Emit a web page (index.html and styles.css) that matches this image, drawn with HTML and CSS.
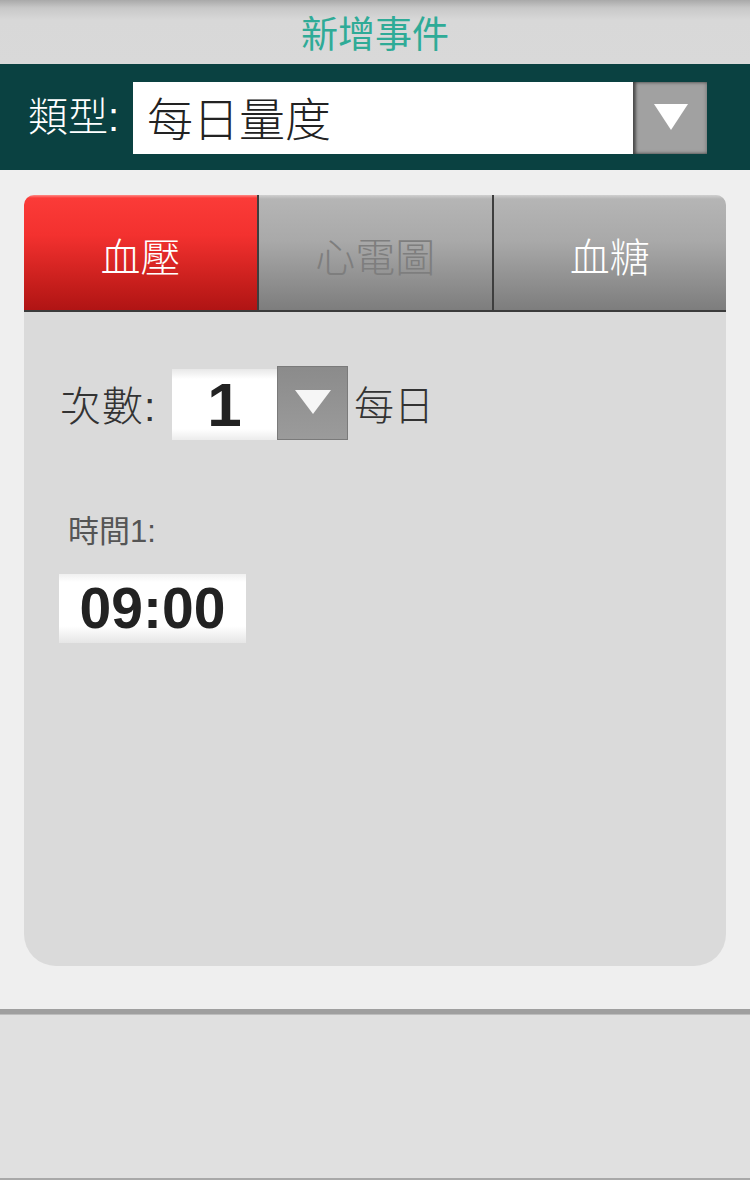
FILE: index.html
```html
<!DOCTYPE html>
<html lang="zh-Hant">
<head>
<meta charset="utf-8">
<title>新增事件</title>
<link rel="stylesheet" href="styles.css">
</head>
<body>
<div class="app">
  <header class="topbar">
    <h1 class="title">新增事件</h1>
  </header>
  <section class="typebar">
    <span class="type-label">類型:</span>
    <div class="select">
      <div class="select-value">每日量度</div>
      <div class="select-btn">
        <svg width="36" height="28" viewBox="0 0 36 28"><polygon points="1,1 35,1 18,27" fill="#ffffff"/></svg>
      </div>
    </div>
  </section>
  <main class="main">
    <div class="card">
      <div class="tabs">
        <div class="tab tab-active">血壓</div>
        <div class="tab tab-disabled">心電圖</div>
        <div class="tab tab-normal">血糖</div>
      </div>
      <div class="card-body">
        <div class="count-row">
          <span class="count-label">次數:</span>
          <div class="num-box">1</div>
          <div class="num-btn">
            <svg width="36" height="24" viewBox="0 0 36 24"><polygon points="0,0 36,0 18,24" fill="#f6f6f6"/></svg>
          </div>
          <span class="count-unit">每日</span>
        </div>
        <div class="time-label">時間1:</div>
        <div class="time-box">09:00</div>
      </div>
    </div>
  </main>
  <footer class="footer"></footer>
</div>
</body>
</html>
```

FILE: styles.css
```css
* { box-sizing: border-box; }
html, body { margin: 0; padding: 0; }
body {
  width: 750px;
  height: 1180px;
  overflow: hidden;
  font-family: "Noto Sans CJK TC", "Noto Sans", sans-serif;
  background: #efefef;
}
.app { display: flex; flex-direction: column; height: 1180px; }

.topbar {
  height: 64px;
  background: linear-gradient(to bottom, #a9a9a9 0px, #c8c8c8 8px, #d8d8d8 20px, #d9d9d9 100%);
  display: flex;
  align-items: center;
  justify-content: center;
}
.title {
  margin: 0;
  font-weight: 400;
  font-size: 37px;
  line-height: 1;
  color: #2fab97;
  padding-top: 0;
}

.typebar {
  height: 106px;
  background: #0a4141;
  display: flex;
  align-items: flex-start;
  padding: 18px 43px 0 28px;
}
.type-label {
  color: #ffffff;
  font-family: "Liberation Sans", "Noto Sans CJK TC", sans-serif;
  font-size: 40px;
  line-height: 70px;
  width: 105px;
  font-weight: 300;
}
.select {
  display: flex;
  height: 72px;
  flex: 1;
}
.select-value {
  flex: 1;
  background: #ffffff;
  color: #222;
  font-size: 46px;
  font-weight: 300;
  line-height: 68px;
  padding-left: 14px;
}
.select-btn {
  width: 74px;
  background: #a1a1a1;
  box-shadow: inset 3px 0 3px rgba(0,0,0,0.45), inset 0 0 4px rgba(0,0,0,0.35);
  display: flex;
  align-items: center;
  justify-content: center;
}
.select-btn svg { margin-left: 2px; margin-top: -2px; }

.main {
  height: 839px;
  padding: 25px 24px 0 24px;
  background: #efefef;
}
.card {
  height: 771px;
  background: #dadada;
  border-radius: 10px 10px 32px 32px;
  overflow: hidden;
}
.tabs {
  display: flex;
  height: 117px;
  border-bottom: 2px solid #3b3b3b;
}
.tab {
  flex: 1;
  display: flex;
  align-items: center;
  justify-content: center;
  font-size: 40px;
  font-weight: 300;
  padding-top: 4px;
}
.tab + .tab { border-left: 2px solid #3e3e3e; }
.tab-active {
  flex: 0 0 233px;
  color: #ffffff;
  background: linear-gradient(to bottom, #ff8a86 0px, #fb3b38 3px, #f3312f 35%, #c41d1b 80%, #b01414 100%);
}
.tab-disabled {
  color: #7e7e7e;
  background: linear-gradient(to bottom, #d0d0d0 0px, #b5b5b5 4px, #a9a9a9 40%, #7d7d7d 100%);
}
.tab-normal {
  color: #ffffff;
  background: linear-gradient(to bottom, #d0d0d0 0px, #b5b5b5 4px, #a9a9a9 40%, #7d7d7d 100%);
}

.card-body {
  padding: 54px 0 0 35px;
}
.count-row {
  display: flex;
  align-items: center;
  height: 74px;
}
.count-label {
  font-family: "Liberation Sans", "Noto Sans CJK TC", sans-serif;
  font-size: 41px;
  font-weight: 300;
  color: #333333;
  width: 113px;
  padding-left: 1px;
  letter-spacing: 1px;
}
.num-box {
  width: 105px;
  height: 71px;
  margin-top: 3px;
  background: linear-gradient(to bottom, #e8e8e8 0px, #ffffff 10px, #ffffff 60px, #ececec 100%);
  font-family: "Liberation Sans", Arial, sans-serif;
  font-weight: 700;
  font-size: 62px;
  line-height: 71px;
  text-align: center;
  color: #222222;
}
.num-btn {
  width: 71px;
  height: 74px;
  background: linear-gradient(to bottom, #8b8b8b, #9b9b9b);
  border: 1px solid #7a7a7a;
  display: flex;
  align-items: center;
  justify-content: center;
}
.num-btn svg { margin-top: -2px; }
.count-unit {
  font-size: 40px;
  font-weight: 300;
  color: #333333;
  margin-left: 6px;
}
.time-label {
  font-family: "Liberation Sans", "Noto Sans CJK TC", sans-serif;
  font-size: 31px;
  color: #555555;
  margin-top: 72px;
  padding-left: 9px;
  line-height: 40px;
}
.time-box {
  margin-top: 22px;
  width: 187px;
  height: 69px;
  background: linear-gradient(to bottom, #f0f0f0 0px, #ffffff 8px, #ffffff 52px, #e6e6e6 100%);
  font-family: "Liberation Sans", Arial, sans-serif;
  font-weight: 700;
  font-size: 57px;
  line-height: 69px;
  text-align: center;
  color: #222222;
}

.footer {
  flex: 1;
  background: #e0e0e0;
  border-top: 5px solid #9f9f9f;
  box-shadow: inset 0 1px 0 #bdbdbd;
  border-bottom: 2px solid #a8a8a8;
}
```
